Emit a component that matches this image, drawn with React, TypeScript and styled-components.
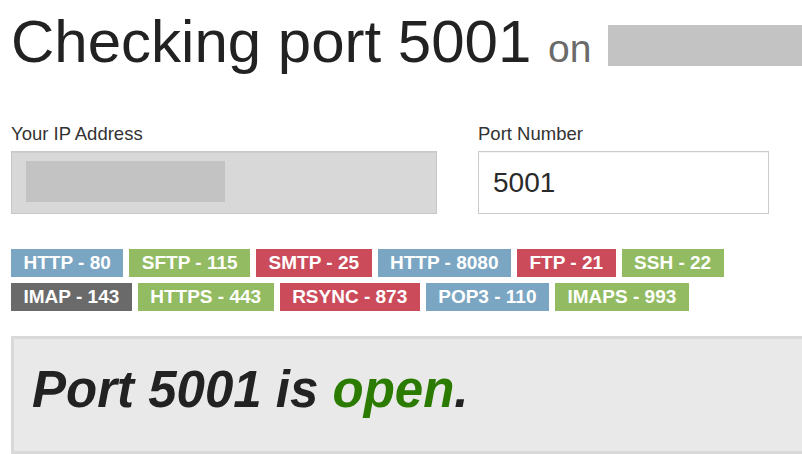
import { createGlobalStyle, styled } from "styled-components";

const GlobalStyle = createGlobalStyle`
  html, body {
    margin: 0;
    padding: 0;
    overflow: hidden;
    background: #fff;
  }
  body {
    font-family: "Liberation Sans", Arial, sans-serif;
    color: #222;
  }
`;

const Page = styled.div`
  padding: 9px 0 0 11px;
  overflow: hidden;
`;

const Title = styled.h1`
  margin: 0;
  font-size: 60px;
  font-weight: 400;
  line-height: 66px;
  color: #222;
  white-space: nowrap;
`;

const Small = styled.small`
  font-size: 39px;
  color: #6a6a6a;
`;

const Redacted = styled.span<{ $w: number; $h: number }>`
  display: inline-block;
  width: ${(p) => p.$w}px;
  height: ${(p) => p.$h}px;
  background: #c3c3c3;
`;

const HostMask = styled(Redacted)`
  vertical-align: -4px;
`;

const Form = styled.div`
  display: grid;
  grid-template-columns: 426px 291px;
  column-gap: 41px;
  margin-top: 41px;
`;

const Field = styled.div`
  display: flex;
  flex-direction: column;
`;

const Label = styled.label`
  display: block;
  font-size: 18.5px;
  line-height: 22px;
  color: #333;
  margin-bottom: 6px;
`;

const IpBox = styled.div`
  box-sizing: border-box;
  height: 63px;
  background: #d8d8d8;
  border: 1px solid #c8c8c8;
  box-shadow: inset 0 1px 1px rgba(0, 0, 0, 0.06);
  padding: 9px 0 0 14px;
`;

const PortInput = styled.input`
  box-sizing: border-box;
  height: 63px;
  width: 100%;
  margin: 0;
  border: 1px solid #cccccc;
  box-shadow: inset 0 1px 1px rgba(0, 0, 0, 0.05);
  padding: 0 14px;
  font-family: "Liberation Sans", Arial, sans-serif;
  font-size: 28px;
  color: #2a2a2a;
  background: #fff;
  outline: none;
`;

const Tags = styled.div`
  display: flex;
  flex-wrap: wrap;
  gap: 6px;
  width: 780px;
  margin-top: 35px;
`;

const tagColors = {
  blue: "#7ba6c3",
  green: "#92bb62",
  red: "#cb4b5b",
  gray: "#6a6a6a",
};

type TagColor = keyof typeof tagColors;

const Tag = styled.span<{ $color: TagColor }>`
  display: inline-block;
  height: 28px;
  line-height: 28px;
  padding: 0 12.5px;
  font-size: 19px;
  font-weight: 700;
  color: #fff;
  background: ${(p) => tagColors[p.$color]};
  white-space: nowrap;
`;

const Result = styled.div`
  box-sizing: border-box;
  width: calc(100% + 20px);
  margin-top: 25px;
  background: #e9e9e9;
  border: 3px solid #d9d9d9;
  padding: 21px 18px 31px;
`;

const ResultText = styled.p`
  margin: 0;
  font-size: 51px;
  line-height: 60px;
  font-weight: 700;
  font-style: italic;
  color: #222;
`;

const Open = styled.span`
  color: #2b7b00;
`;

const ports: { name: string; port: number; color: TagColor }[] = [
  { name: "HTTP", port: 80, color: "blue" },
  { name: "SFTP", port: 115, color: "green" },
  { name: "SMTP", port: 25, color: "red" },
  { name: "HTTP", port: 8080, color: "blue" },
  { name: "FTP", port: 21, color: "red" },
  { name: "SSH", port: 22, color: "green" },
  { name: "IMAP", port: 143, color: "gray" },
  { name: "HTTPS", port: 443, color: "green" },
  { name: "RSYNC", port: 873, color: "red" },
  { name: "POP3", port: 110, color: "blue" },
  { name: "IMAPS", port: 993, color: "green" },
];

export default function App() {
  return (
    <>
      <GlobalStyle />
      <Page>
        <Title>
          Checking port 5001 <Small>on</Small> <HostMask $w={199} $h={41} />
        </Title>

        <Form>
          <Field>
            <Label>Your IP Address</Label>
            <IpBox>
              <Redacted $w={199} $h={41} />
            </IpBox>
          </Field>
          <Field>
            <Label htmlFor="port">Port Number</Label>
            <PortInput id="port" defaultValue="5001" />
          </Field>
        </Form>

        <Tags>
          {ports.map((p) => (
            <Tag key={`${p.name}-${p.port}`} $color={p.color}>
              {p.name} - {p.port}
            </Tag>
          ))}
        </Tags>

        <Result>
          <ResultText>
            Port 5001 is <Open>open</Open>.
          </ResultText>
        </Result>
      </Page>
    </>
  );
}
